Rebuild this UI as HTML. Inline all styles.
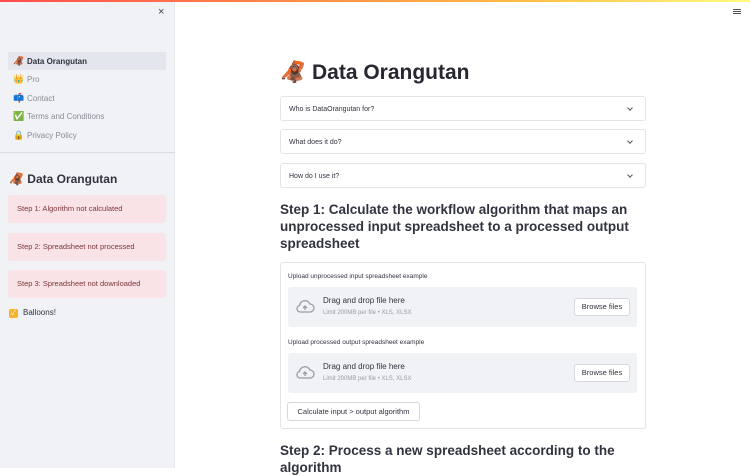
<!DOCTYPE html>
<html><head><meta charset="utf-8"><style>
*{box-sizing:border-box;margin:0;padding:0}
body{width:750px;height:468px;overflow:hidden;background:#fff;font-family:"Liberation Sans","Noto Sans CJK JP",sans-serif;color:#31333f;position:relative}
.top{position:absolute;left:0;top:0;width:750px;height:2px;background:linear-gradient(90deg,#ff4b4b,#ffbd45 70%,#fffd80);z-index:5}
.side{position:absolute;left:0;top:0;width:175px;height:468px;background:#f0f2f6;border-right:1px solid #e6e8ee}
.a{position:absolute}
.nav{position:absolute;left:8px;width:158px;height:18px;font-size:8px;line-height:18px;padding-left:5px;color:#8a8c96}
.nav.act{background:#e3e6ec;color:#31333f;font-weight:bold}
.em{display:inline-block;width:14px;font-size:9px}
.alert{position:absolute;left:8px;width:158px;height:28px;background:#f9e3e6;border-radius:3px;color:#7d353b;font-size:7.5px;line-height:28px;padding-left:9px}
.exp{position:absolute;left:280px;width:366px;border:1px solid #e3e4e8;border-radius:3px;font-size:7px;line-height:25px;padding-left:8px;color:#31333f}
.exp:after{content:"";position:absolute;right:13px;top:9px;width:3px;height:3px;border-right:1.2px solid #555;border-bottom:1.2px solid #555;transform:rotate(45deg)}
h2{position:absolute;left:280px;font-size:13.5px;line-height:17px;font-weight:bold;color:#31333f;width:350px}
.drop{position:absolute;left:288px;width:349px;height:40px;background:#f0f2f6;border-radius:3px}
.btn{position:absolute;background:#fff;border:1px solid #d6d8de;border-radius:3px;font-size:7.5px;text-align:center}
.lbl{position:absolute;left:288px;font-size:6.5px;color:#31333f}
</style></head><body>
<div class="top"></div>
<div class="side">
<div class="a" style="left:158px;top:6px;font-size:11px;color:#444">×</div>
<div class="nav act" style="top:52px"><span class="em">🦧</span>Data Orangutan</div>
<div class="nav" style="top:70px"><span class="em">👑</span>Pro</div>
<div class="nav" style="top:89px"><span class="em">📫</span>Contact</div>
<div class="nav" style="top:107px"><span class="em">✅</span>Terms and Conditions</div>
<div class="nav" style="top:126px"><span class="em">🔒</span>Privacy Policy</div>
<div class="a" style="left:0;top:152px;width:175px;height:1px;background:#d9dbe1"></div>
<div class="a" style="left:9px;top:172px;font-size:12px;font-weight:bold">🦧 Data Orangutan</div>
<div class="alert" style="top:195px">Step 1: Algorithm not calculated</div>
<div class="alert" style="top:233px">Step 2: Spreadsheet not processed</div>
<div class="alert" style="top:270px">Step 3: Spreadsheet not downloaded</div>
<div class="a" style="left:9px;top:309px;width:9px;height:9px;background:#f6b42c;border-radius:2px;color:#fff;font-size:7px;line-height:9px;text-align:center">✓</div>
<div class="a" style="left:23px;top:308px;font-size:8px">Balloons!</div>
</div>
<div class="a" style="left:733px;top:9px;width:8px;height:1px;background:#555;box-shadow:0 2px 0 #555,0 4px 0 #555"></div>
<div class="a" style="left:280px;top:61px;font-size:21px;font-weight:bold;color:#262730">🦧 Data Orangutan</div>
<div class="exp" style="top:96px;height:25px">Who is DataOrangutan for?</div>
<div class="exp" style="top:129px;height:25px">What does it do?</div>
<div class="exp" style="top:163px;height:25px">How do I use it?</div>
<h2 style="top:201px">Step 1: Calculate the workflow algorithm that maps an unprocessed input spreadsheet to a processed output spreadsheet</h2>
<div class="a" style="left:280px;top:262px;width:366px;height:167px;border:1px solid #e3e4e8;border-radius:3px"></div>
<div class="lbl" style="top:273px">Upload unprocessed input spreadsheet example</div>
<div class="drop" style="top:287px"></div>
<div class="lbl" style="top:339px">Upload processed output spreadsheet example</div>
<div class="drop" style="top:353px"></div>
<svg class="a" style="left:295px;top:298px" width="20" height="16" viewBox="0 0 20 16"><path d="M5 14h10a4 4 0 0 0 0-8 5.5 5.5 0 0 0-10.5 1.5A3.3 3.3 0 0 0 5 14z" fill="none" stroke="#9a9ca6" stroke-width="1.3"/><path d="M10 12V8M8 10l2-2 2 2" stroke="#9a9ca6" stroke-width="1.3" fill="none"/></svg>
<svg class="a" style="left:295px;top:364px" width="20" height="16" viewBox="0 0 20 16"><path d="M5 14h10a4 4 0 0 0 0-8 5.5 5.5 0 0 0-10.5 1.5A3.3 3.3 0 0 0 5 14z" fill="none" stroke="#9a9ca6" stroke-width="1.3"/><path d="M10 12V8M8 10l2-2 2 2" stroke="#9a9ca6" stroke-width="1.3" fill="none"/></svg>
<div class="a" style="left:323px;top:296px;font-size:8px">Drag and drop file here</div>
<div class="a" style="left:323px;top:310px;font-size:6px;color:#9a9ca6">Limit 200MB per file • XLS, XLSX</div>
<div class="a" style="left:323px;top:362px;font-size:8px">Drag and drop file here</div>
<div class="a" style="left:323px;top:376px;font-size:6px;color:#9a9ca6">Limit 200MB per file • XLS, XLSX</div>
<div class="btn" style="left:574px;top:298px;width:56px;height:18px;line-height:16px">Browse files</div>
<div class="btn" style="left:574px;top:364px;width:56px;height:18px;line-height:16px">Browse files</div>
<div class="btn" style="left:287px;top:402px;width:133px;height:19px;line-height:17px">Calculate input &gt; output algorithm</div>
<h2 style="top:442px">Step 2: Process a new spreadsheet according to the algorithm</h2>
</body></html>
